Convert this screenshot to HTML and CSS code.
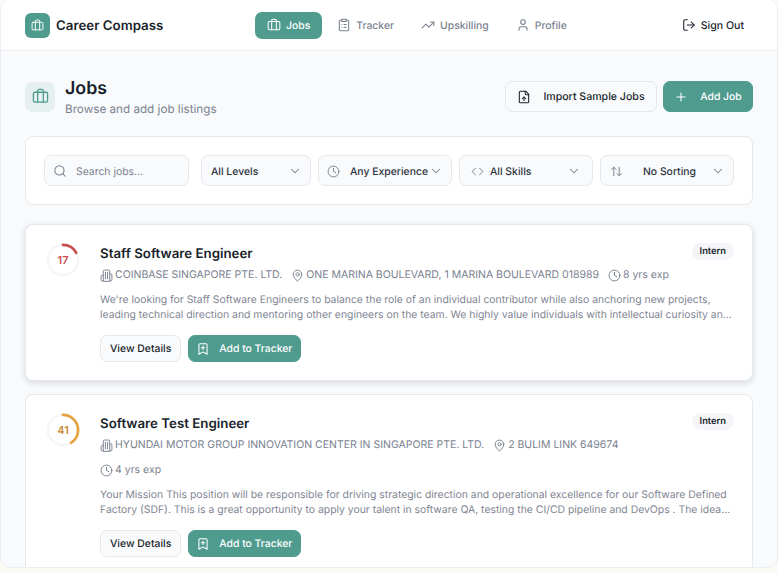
FILE: index.html
```html
<!DOCTYPE html>
<html lang="en">

<head>
    <meta charset="UTF-8">
    <meta name="viewport" content="width=device-width, initial-scale=1.0">
    <title>Career Compass</title>
    <link rel="stylesheet" href="styles.css">
</head>

<body>
    <svg class="icon-defs" aria-hidden="true">
        <symbol id="i-briefcase" viewBox="0 0 24 24"><path d="M16 20V4a2 2 0 0 0-2-2h-4a2 2 0 0 0-2 2v16"/><rect width="20" height="14" x="2" y="6" rx="2"/></symbol>
        <symbol id="i-clipboard" viewBox="0 0 24 24"><rect width="8" height="4" x="8" y="2" rx="1"/><path d="M16 4h2a2 2 0 0 1 2 2v14a2 2 0 0 1-2 2H6a2 2 0 0 1-2-2V6a2 2 0 0 1 2-2h2"/><path d="M12 11h4"/><path d="M12 16h4"/><path d="M8 11h.01"/><path d="M8 16h.01"/></symbol>
        <symbol id="i-trending" viewBox="0 0 24 24"><path d="M22 7 13.5 15.5 8.5 10.5 2 17"/><path d="M16 7h6v6"/></symbol>
        <symbol id="i-user" viewBox="0 0 24 24"><path d="M19 21v-2a4 4 0 0 0-4-4H9a4 4 0 0 0-4 4v2"/><circle cx="12" cy="7" r="4"/></symbol>
        <symbol id="i-logout" viewBox="0 0 24 24"><path d="M9 21H5a2 2 0 0 1-2-2V5a2 2 0 0 1 2-2h4"/><path d="m16 17 5-5-5-5"/><path d="M21 12H9"/></symbol>
        <symbol id="i-file-up" viewBox="0 0 24 24"><path d="M15 2H6a2 2 0 0 0-2 2v16a2 2 0 0 0 2 2h12a2 2 0 0 0 2-2V7Z"/><path d="M14 2v4a2 2 0 0 0 2 2h4"/><path d="M12 18v-6"/><path d="m9 15 3-3 3 3"/></symbol>
        <symbol id="i-plus" viewBox="0 0 24 24"><path d="M5 12h14"/><path d="M12 5v14"/></symbol>
        <symbol id="i-search" viewBox="0 0 24 24"><circle cx="11" cy="11" r="8"/><path d="m21 21-4.3-4.3"/></symbol>
        <symbol id="i-clock" viewBox="0 0 24 24"><circle cx="12" cy="12" r="10"/><path d="M12 6v6l4 2"/></symbol>
        <symbol id="i-code" viewBox="0 0 24 24"><path d="m16 18 6-6-6-6"/><path d="m8 6-6 6 6 6"/></symbol>
        <symbol id="i-sort" viewBox="0 0 24 24"><path d="m21 16-4 4-4-4"/><path d="M17 20V4"/><path d="m3 8 4-4 4 4"/><path d="M7 4v16"/></symbol>
        <symbol id="i-chevron" viewBox="0 0 24 24"><path d="m6 9 6 6 6-6"/></symbol>
        <symbol id="i-building" viewBox="0 0 24 24"><path d="M6 22V4a2 2 0 0 1 2-2h8a2 2 0 0 1 2 2v18Z"/><path d="M6 12H4a2 2 0 0 0-2 2v6a2 2 0 0 0 2 2h2"/><path d="M18 9h2a2 2 0 0 1 2 2v9a2 2 0 0 1-2 2h-2"/><path d="M10 6v12"/><path d="M14 6v12"/></symbol>
        <symbol id="i-pin" viewBox="0 0 24 24"><path d="M20 10c0 5-5.500 10.200-7.400 11.800a1 1 0 0 1-1.200 0C9.500 20.200 4 15 4 10a8 8 0 0 1 16 0"/><circle cx="12" cy="10" r="3"/></symbol>
        <symbol id="i-bookmark" viewBox="0 0 24 24"><path d="M19 21l-7-4-7 4V5a2 2 0 0 1 2-2h10a2 2 0 0 1 2 2z"/><path d="M12 7v6"/><path d="M15 10H9"/></symbol>
    </svg>

    <div class="app">
        <header class="header">
            <div class="brand">
                <span class="brand-logo"><svg class="icon icon-13"><use href="#i-briefcase"/></svg></span>
                <span class="brand-name">Career Compass</span>
            </div>
            <nav class="nav">
                <a class="nav-link active" href="#"><svg class="icon icon-14"><use href="#i-briefcase"/></svg>Jobs</a>
                <a class="nav-link" href="#"><svg class="icon icon-14"><use href="#i-clipboard"/></svg>Tracker</a>
                <a class="nav-link" href="#"><svg class="icon icon-14"><use href="#i-trending"/></svg>Upskilling</a>
                <a class="nav-link" href="#"><svg class="icon icon-14"><use href="#i-user"/></svg>Profile</a>
            </nav>
            <a class="sign-out" href="#"><svg class="icon icon-14"><use href="#i-logout"/></svg>Sign Out</a>
        </header>

        <main class="main">
            <div class="page-head">
                <span class="page-icon"><svg class="icon icon-17"><use href="#i-briefcase"/></svg></span>
                <div class="page-titles">
                    <h1>Jobs</h1>
                    <p>Browse and add job listings</p>
                </div>
                <div class="page-actions">
                    <button class="btn btn-outline btn-import"><svg class="icon icon-14"><use href="#i-file-up"/></svg>Import Sample Jobs</button>
                    <button class="btn btn-primary btn-add"><svg class="icon icon-14"><use href="#i-plus"/></svg>Add Job</button>
                </div>
            </div>

            <section class="filters">
                <div class="field field-search">
                    <svg class="icon icon-14 muted"><use href="#i-search"/></svg>
                    <span class="placeholder">Search jobs...</span>
                </div>
                <div class="field field-levels">
                    <span class="field-label">All Levels</span>
                    <svg class="icon icon-14 muted chevron"><use href="#i-chevron"/></svg>
                </div>
                <div class="field field-exp">
                    <svg class="icon icon-13 muted"><use href="#i-clock"/></svg>
                    <span class="field-label">Any Experience</span>
                    <svg class="icon icon-14 muted chevron"><use href="#i-chevron"/></svg>
                </div>
                <div class="field field-skills">
                    <svg class="icon icon-13 muted"><use href="#i-code"/></svg>
                    <span class="field-label">All Skills</span>
                    <svg class="icon icon-14 muted chevron"><use href="#i-chevron"/></svg>
                </div>
                <div class="field field-sort">
                    <svg class="icon icon-13 muted"><use href="#i-sort"/></svg>
                    <span class="field-label">No Sorting</span>
                    <svg class="icon icon-14 muted chevron"><use href="#i-chevron"/></svg>
                </div>
            </section>

            <article class="job-card job-card-hover">
                <svg class="score" viewBox="0 0 36 36">
                    <circle class="score-track" cx="18" cy="18" r="16"/>
                    <circle class="score-arc score-low" cx="18" cy="18" r="16" pathLength="100" stroke-dasharray="17 100"/>
                    <text class="score-text score-low-text" x="18" y="22">17</text>
                </svg>
                <div class="job-body">
                    <div class="job-top">
                        <h2>Staff Software Engineer</h2>
                        <span class="chip">Intern</span>
                    </div>
                    <div class="job-meta">
                        <span class="meta-item"><svg class="icon icon-13"><use href="#i-building"/></svg>COINBASE SINGAPORE PTE. LTD.</span>
                        <span class="meta-item"><svg class="icon icon-13"><use href="#i-pin"/></svg>ONE MARINA BOULEVARD, 1 MARINA BOULEVARD 018989</span>
                        <span class="meta-item"><svg class="icon icon-13"><use href="#i-clock"/></svg>8 yrs exp</span>
                    </div>
                    <p class="job-desc">We're looking for Staff Software Engineers to balance the role of an individual contributor while also anchoring new projects, leading technical direction and mentoring other engineers on the team. We highly value individuals with intellectual curiosity and a passion for building products that matter to customers around the world every day.</p>
                    <div class="job-actions">
                        <button class="btn btn-outline btn-small">View Details</button>
                        <button class="btn btn-primary btn-small"><svg class="icon icon-14"><use href="#i-bookmark"/></svg>Add to Tracker</button>
                    </div>
                </div>
            </article>

            <article class="job-card">
                <svg class="score" viewBox="0 0 36 36">
                    <circle class="score-track" cx="18" cy="18" r="16"/>
                    <circle class="score-arc score-mid" cx="18" cy="18" r="16" pathLength="100" stroke-dasharray="41 100"/>
                    <text class="score-text score-mid-text" x="18" y="22">41</text>
                </svg>
                <div class="job-body">
                    <div class="job-top">
                        <h2>Software Test Engineer</h2>
                        <span class="chip">Intern</span>
                    </div>
                    <div class="job-meta">
                        <span class="meta-item"><svg class="icon icon-13"><use href="#i-building"/></svg>HYUNDAI MOTOR GROUP INNOVATION CENTER IN SINGAPORE PTE. LTD.</span>
                        <span class="meta-item"><svg class="icon icon-13"><use href="#i-pin"/></svg>2 BULIM LINK 649674</span>
                        <span class="meta-item"><svg class="icon icon-13"><use href="#i-clock"/></svg>4 yrs exp</span>
                    </div>
                    <p class="job-desc job-desc-tight">Your Mission This position will be responsible for driving strategic direction and operational excellence for our Software Defined Factory (SDF). This is a great opportunity to apply your talent in software QA, testing the CI/CD pipeline and DevOps . The ideal candidate will work closely with teams across the whole organisation every day.</p>
                    <div class="job-actions">
                        <button class="btn btn-outline btn-small">View Details</button>
                        <button class="btn btn-primary btn-small"><svg class="icon icon-14"><use href="#i-bookmark"/></svg>Add to Tracker</button>
                    </div>
                </div>
            </article>
        </main>
    </div>
</body>

</html>
```

FILE: styles.css
```css
* {
    box-sizing: border-box;
}

html,
body {
    margin: 0;
    height: 573px;
    overflow: hidden;
    background-color: #fbfaf5;
}

body {
    font-family: Inter, "Liberation Sans", sans-serif;
    color: #1a1f2b;
    text-rendering: geometricPrecision;
}

.icon-defs {
    display: none;
}

.icon {
    fill: none;
    stroke: currentColor;
    stroke-width: 1.800;
    stroke-linecap: round;
    stroke-linejoin: round;
    flex-shrink: 0;
}

.icon-13 {
    width: 13px;
    height: 13px;
}

.icon-14 {
    width: 14px;
    height: 14px;
}

.icon-17 {
    width: 17px;
    height: 17px;
}

.muted {
    color: #7a8290;
}

.app {
    height: 568px;
    display: flex;
    flex-direction: column;
    overflow: hidden;
    background-color: #f8fafc;
    border: 1px solid #eceef1;
    border-top: none;
    border-radius: 10px;
}

/* Header */
.header {
    height: 51px;
    flex-shrink: 0;
    display: flex;
    align-items: center;
    padding: 0 33px 0 24px;
    background-color: #fff;
    border-bottom: 1px solid #eceef1;
}

.brand {
    display: flex;
    align-items: center;
    gap: 6px;
    width: 230px;
}

.brand-logo {
    width: 25px;
    height: 25px;
    display: flex;
    align-items: center;
    justify-content: center;
    border-radius: 6px;
    color: #fff;
    background-color: #4f9c8f;
}

.brand-name {
    padding-top: 1px;
    font-size: 13.300px;
    font-weight: 600;
}

.nav {
    display: flex;
    align-items: center;
    gap: 3px;
}

.nav-link {
    display: flex;
    align-items: center;
    gap: 5px;
    height: 27px;
    padding: 0 12px;
    border-radius: 7px;
    font-size: 10.400px;
    font-weight: 500;
    color: #7a8290;
    text-decoration: none;
}

.nav-link.active {
    color: #fff;
    background-color: #4f9c8f;
}

.sign-out {
    margin-left: auto;
    display: flex;
    align-items: center;
    gap: 5px;
    font-size: 10.600px;
    font-weight: 500;
    color: #1a1f2b;
    text-decoration: none;
}

/* Main */
.main {
    flex: 1;
    min-height: 0;
    overflow: hidden;
    padding: 25px 24px 0;
}

.page-head {
    display: flex;
    align-items: center;
    margin-bottom: 19px;
}

.page-icon {
    width: 30px;
    height: 30px;
    display: flex;
    align-items: center;
    justify-content: center;
    margin-right: 10px;
    border-radius: 7px;
    color: #4f9c8f;
    background-color: #e6f0ee;
}

.page-titles h1 {
    margin: 0;
    padding-top: 1px;
    font-size: 17.800px;
    line-height: 23px;
    font-weight: 600;
}

.page-titles p {
    margin: 0;
    padding-top: 2px;
    font-size: 11.700px;
    line-height: 15px;
    color: #7a8290;
}

.page-actions {
    margin-left: auto;
    display: flex;
    gap: 6px;
}

.btn {
    display: flex;
    align-items: center;
    justify-content: center;
    border-radius: 7px;
    font-family: inherit;
    font-size: 10.400px;
    font-weight: 500;
    text-rendering: inherit;
    cursor: pointer;
}

.btn-outline {
    color: #1a1f2b;
    background-color: #f8fafc;
    border: 1px solid #e6e8ec;
}

.btn-primary {
    color: #fff;
    background-color: #4f9c8f;
    border: 1px solid #4f9c8f;
}

.btn-import {
    width: 152px;
    height: 31px;
    gap: 12px;
    font-size: 10.600px;
}

.btn-add {
    width: 90px;
    height: 31px;
    gap: 12px;
}

.btn-small {
    height: 27px;
    padding: 0 9px;
}

.btn-primary.btn-small {
    gap: 9px;
    padding: 0 8px 0 7px;
}

/* Filters */
.filters {
    display: flex;
    gap: 7px;
    padding: 18px;
    margin-bottom: 19px;
    background-color: #fff;
    border: 1px solid #e6e8ec;
    border-radius: 8px;
}

.field {
    height: 31px;
    display: flex;
    align-items: center;
    padding: 1px 8px 0 9px;
    font-size: 10.400px;
    white-space: nowrap;
    color: #2c3340;
    background-color: #f8fafc;
    border: 1px solid #e6e8ec;
    border-radius: 7px;
}

.chevron {
    margin-left: auto;
}

.field-label {
    font-weight: 500;
}

.field-search {
    width: 145px;
    gap: 9px;
    margin-right: 5px;
    padding-left: 8px;
}

.placeholder {
    color: #7a8290;
}

.field-levels {
    width: 110px;
}

.field-exp {
    width: 134px;
    padding-left: 8px;
}

.field-exp .field-label {
    margin-left: 10px;
}

.field-skills {
    width: 134px;
    padding-left: 11px;
    padding-right: 11px;
}

.field-skills .field-label {
    margin-left: 6px;
}

.field-sort {
    width: 134px;
}

.field-sort .field-label {
    margin-left: 20px;
}

/* Job cards */
.job-card {
    display: flex;
    gap: 20px;
    padding: 18px 18px 18px 20px;
    margin-bottom: 13px;
    background-color: #fff;
    border: 1px solid #e6e8ec;
    border-radius: 8px;
}

.job-card-hover {
    box-shadow: 0 2px 6px rgba(20, 30, 50, 0.14);
}

.score {
    width: 34px;
    height: 34px;
    flex-shrink: 0;
}

.score-track {
    fill: none;
    stroke: #f5f6f8;
    stroke-width: 2.800;
}

.score-arc {
    fill: none;
    stroke-width: 2.800;
    stroke-linecap: round;
    transform: rotate(-90deg);
    transform-origin: 18px 18px;
}

.score-low {
    stroke: #c9504f;
}

.score-mid {
    stroke: #e5a23e;
}

.score-text {
    font-size: 11.500px;
    font-weight: 600;
    text-anchor: middle;
}

.score-low-text {
    fill: #c9504f;
}

.score-mid-text {
    fill: #c98a3a;
}

.job-body {
    flex: 1;
    min-width: 0;
}

.job-top {
    display: flex;
    align-items: flex-start;
    justify-content: space-between;
    height: 24px;
}

.job-top h2 {
    margin: 0;
    padding-top: 1px;
    font-size: 13.300px;
    line-height: 20px;
    font-weight: 600;
}

.chip {
    height: 17px;
    padding: 0 8px;
    font-size: 9.300px;
    line-height: 18px;
    font-weight: 600;
    border-radius: 9px;
    background-color: #f3f5f8;
}

.job-meta {
    display: flex;
    flex-wrap: wrap;
    gap: 9px 9px;
    max-width: 580px;
    margin-bottom: 8.500px;
    font-size: 10.500px;
    line-height: 16px;
    color: #7a8290;
}

.meta-item {
    display: flex;
    align-items: center;
    gap: 2px;
}

.job-desc {
    display: -webkit-box;
    -webkit-box-orient: vertical;
    -webkit-line-clamp: 2;
    overflow: hidden;
    margin: 0 0 13.500px;
    font-size: 10.400px;
    line-height: 15px;
    color: #7f8693;
}

/* the second description breaks one letter earlier */
.job-desc-tight {
    padding-right: 2.500px;
}

.job-actions {
    display: flex;
    gap: 7px;
}
```
